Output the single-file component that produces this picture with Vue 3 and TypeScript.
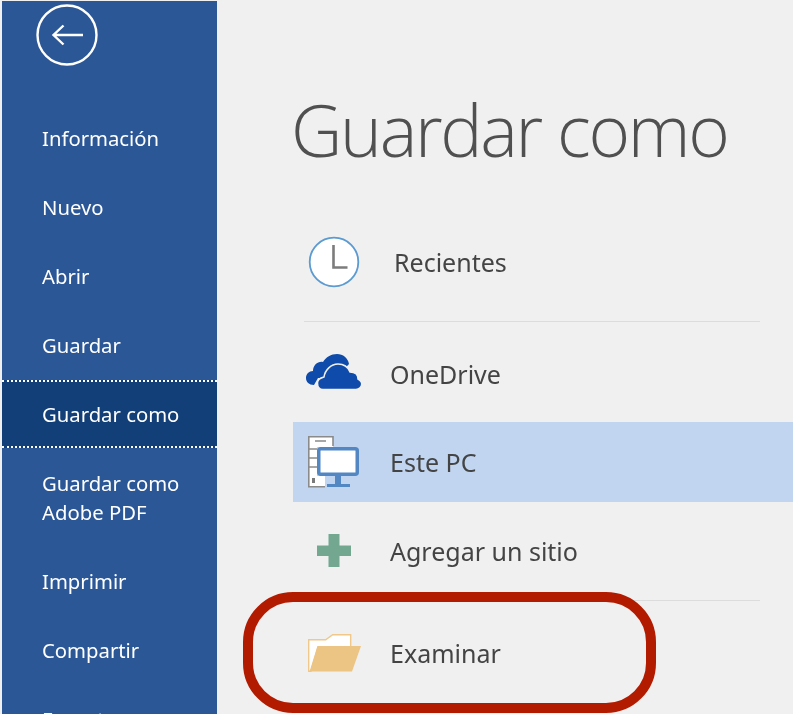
<script setup lang="ts">
const navItems: { label: string; active?: boolean }[] = [
  { label: 'Información' },
  { label: 'Nuevo' },
  { label: 'Abrir' },
  { label: 'Guardar' },
  { label: 'Guardar como', active: true },
  { label: 'Guardar como\nAdobe PDF' },
  { label: 'Imprimir' },
  { label: 'Compartir' },
  { label: 'Exportar' },
]
</script>

<template>
  <div class="page">
    <aside class="sidebar">
      <button class="back" aria-label="Atrás">
        <svg width="62" height="62" viewBox="0 0 62 62">
          <circle cx="31" cy="31" r="29.5" fill="none" stroke="#fff" stroke-width="2.4" />
          <path d="M47 31H18M27.500 21.500 17.500 31l10 9.500" fill="none" stroke="#fff" stroke-width="2.4" />
        </svg>
      </button>
      <nav class="nav">
        <div v-for="item in navItems" :key="item.label" class="nav-item" :class="{ active: item.active }">{{ item.label }}</div>
      </nav>
    </aside>
    <main class="main">
      <h1 class="title">Guardar como</h1>
      <div class="row recent">
        <svg class="icon" width="52" height="52" viewBox="0 0 52 52">
          <circle cx="26" cy="26" r="24.3" fill="#fff" stroke="#5b9bd1" stroke-width="1.8" />
          <path d="M25.500 9v22.500h14" fill="none" stroke="#7c7c7c" stroke-width="2.6" />
        </svg>
        <span class="label">Recientes</span>
      </div>
      <div class="rule"></div>
      <div class="row drive">
        <svg class="icon" width="56" height="36" viewBox="0 0 56 36">
          <path fill="#0f4bab" d="M8 31C3 31 0 28 0 24C0 20 3 17 7 17C7 11 12 7 17 8C20 3 25 0 31 0C37 0 42 4 43 10L30 24H12z" />
          <path fill="#0f4bab" stroke="#f0f0f0" stroke-width="1.500" d="M17 35.500C13 35.500 11.500 32.500 11.500 29C11.500 26 14 24 18 23C19 16 25 10 32 10C38 10 42 13 44 18C49 18 52 21 52 25C54 26 55.700 28 55.700 30C55.700 33 53 35.500 50 35.500z" />
        </svg>
        <span class="label">OneDrive</span>
      </div>
      <div class="row pc">
        <svg class="icon" width="52" height="52" viewBox="0 0 52 52">
          <path d="M1 1h24v10H9v29h8v11H1z" fill="#fff" />
          <path d="M25 10V.8H.8v50H17M.8 13H9M.8 22H9M.8 31H9M7 5h11" fill="none" stroke="#8a8a8a" stroke-width="1.6" />
          <rect x="4" y="42" width="3" height="5" fill="#7a7a7a" />
          <rect x="10.750" y="12.750" width="38.500" height="25.500" rx="2" fill="#fff" stroke="#5287c3" stroke-width="3.500" />
          <path d="M27 40h6v8h-6zM19 48h23v3H19z" fill="#5287c3" />
        </svg>
        <span class="label">Este PC</span>
      </div>
      <div class="row add">
        <svg class="icon" width="34" height="34" viewBox="0 0 34 34">
          <path d="M11.500 0h11v11.500H34v10.500H22.500V33h-11V22H0V11.500h11.500z" fill="#73a78f" />
        </svg>
        <span class="label">Agregar un sitio</span>
      </div>
      <div class="rule"></div>
      <div class="row browse">
        <svg class="icon" width="54" height="38" viewBox="0 0 54 38">
          <path d="M.7 37.300V5.700h17l7-5h18V13H10L3 37.300z" fill="#fff" stroke="#efc88a" stroke-width="1.400" />
          <path d="M9.500 12H53L44 37.500H1.500z" fill="#ecc483" />
        </svg>
        <span class="label">Examinar</span>
      </div>
      <div class="callout"></div>
    </main>
  </div>
</template>

<style>
html, body { margin: 0; background: #f0f0f0; }
</style>

<style scoped>
.page {
  position: relative;
  display: flex;
  width: 793px;
  height: 714px;
  overflow: hidden;
  background: #f0f0f0;
  font-family: "Noto Sans", "Open Sans", sans-serif;
  filter: blur(0.4px);
}
.sidebar {
  flex: none;
  width: 215px;
  margin: 1px 0 0 2px;
  background: #2b5797;
  color: #fff;
}
.back {
  display: block;
  margin: 3px 0 0 34px;
  padding: 0;
  border: 0;
  background: none;
  line-height: 0;
}
.nav {
  display: flex;
  flex-direction: column;
  gap: 40px;
  margin-top: 58px;
}
.nav-item {
  padding-left: 40px;
  font-size: 20.3px;
  line-height: 29px;
  white-space: pre-line;
}
.nav-item.active {
  margin: -20px 0 -19px;
  padding-top: 18px;
  padding-bottom: 17px;
  background: #123f78;
  border-top: 2px dotted #fff;
  border-bottom: 2px dotted #fff;
}
.main {
  position: relative;
  flex: 1;
  min-width: 0;
  padding-left: 76px;
}
.title {
  margin: 78px 0 0 -2px;
  font-family: "Open Sans", "Noto Sans", sans-serif;
  font-size: 71px;
  font-weight: 300;
  letter-spacing: -2.300px;
  line-height: 104px;
  color: #505050;
  white-space: nowrap;
}
.row {
  display: flex;
  align-items: center;
  height: 80px;
  color: #444;
}
.label {
  font-size: 25px;
  line-height: 32px;
  white-space: nowrap;
}
.icon { flex: none; }
.recent { margin: 21px 0 0 15px; height: 118px; }
.recent .label { margin-left: 34px; }
.rule {
  width: 456px;
  height: 1px;
  margin-left: 11px;
  background: #dcdcdc;
}
.drive { margin-left: 13px; height: 100px; }
.drive .label { margin: 4px 0 0 28px; }
.pc {
  background: #c1d5f1;
  padding-left: 15px;
}
.pc .label { margin-left: 30px; }
.add { margin-left: 24px; height: 98px; }
.add .label { margin-left: 39px; }
.browse { margin-left: 15px; height: 104px; }
.browse .label { margin-left: 28px; }
.callout {
  position: absolute;
  left: 26px;
  top: 592px;
  box-sizing: border-box;
  width: 413px;
  height: 121px;
  border: 10px solid #b31b00;
  border-radius: 50px;
}
</style>
